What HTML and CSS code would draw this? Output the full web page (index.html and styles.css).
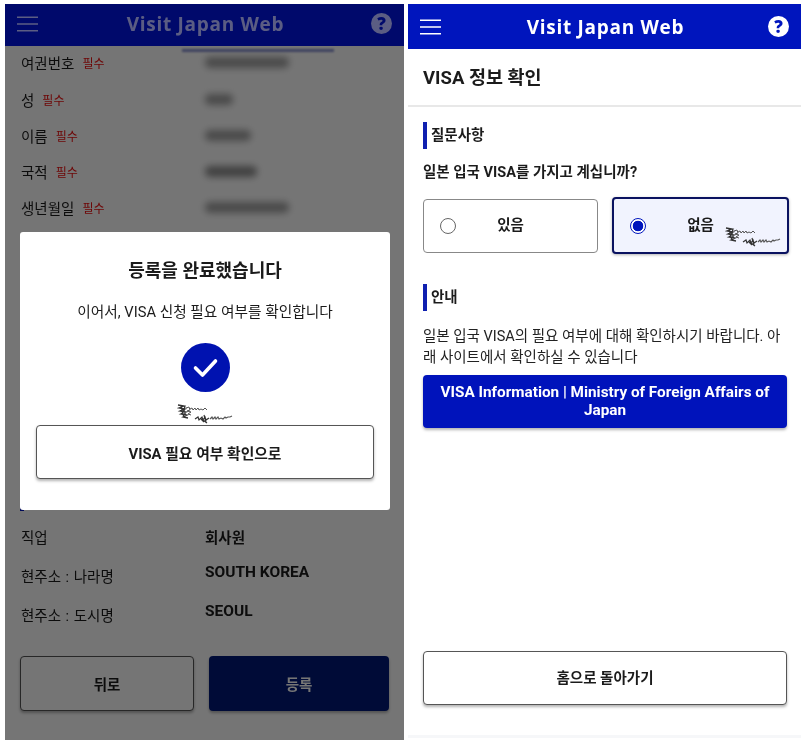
FILE: index.html
```html
<!DOCTYPE html>
<html lang="ko">

<head>
  <meta charset="utf-8">
  <title>Visit Japan Web</title>
  <link rel="stylesheet" href="styles.css">
</head>

<body>
  <svg class="defs" width="0" height="0">
    <symbol id="sig" viewBox="0 0 56 20">
      <path fill="none" stroke="#333" stroke-width="1.3" d="M1 1l6 1-5 2 6 1-5 2 6 1-5 2 6 1-4 2 5 1M4 1l1 6 2 6M8 2l-1 5 2 5" />
      <path fill="none" stroke="#555" stroke-width="1" d="M9 4l3-1 1 3-3 1 4 1-3 2 3 1M13 5l2-1 1 2 2-2 1 2 2-2 1 2 2-1 2 1 2-2 2 2" />
      <path fill="none" stroke="#333" stroke-width="1.2" d="M18 15l3-2 1 3 3-3 1 3 2-3 1 3 3-2M27 11l2 7M26 16l4 3M24 15l3 3" />
      <path fill="none" stroke="#555" stroke-width="1.1" d="M33 15l2-2 1 2 2-2 1 2 2-2 1 2 2-1 2 1 2-2 1 1 2-1 2 0 2-1" />
    </symbol>
  </svg>

  <div class="phone phone-left">
    <header class="topbar">
      <svg class="menu" viewBox="0 0 22 16"><path d="M0 1h22M0 8h22M0 15h22" /></svg>
      <div class="topbar-title">Visit Japan Web</div>
      <div class="help">?</div>
    </header>
    <div class="form">
      <div class="row row-first">
        <div class="label">여권번호<span class="req">필수</span></div>
        <div class="smudge smudge-lg"></div>
      </div>
      <div class="row">
        <div class="label">성<span class="req">필수</span></div>
        <div class="smudge smudge-sm"></div>
      </div>
      <div class="row">
        <div class="label">이름<span class="req">필수</span></div>
        <div class="smudge smudge-md"></div>
      </div>
      <div class="row">
        <div class="label">국적<span class="req">필수</span></div>
        <div class="smudge smudge-md2"></div>
      </div>
      <div class="row">
        <div class="label">생년월일<span class="req">필수</span></div>
        <div class="smudge smudge-lg"></div>
      </div>
    </div>
    <div class="hidden-part">
      <div class="section-edge"></div>
    </div>
    <div class="form-bottom">
      <div class="row-plain">
        <div class="label">직업</div>
        <div class="value value-ko">회사원</div>
      </div>
      <div class="row-plain row-high">
        <div class="label">현주소 : 나라명</div>
        <div class="value">SOUTH KOREA</div>
      </div>
      <div class="row-plain row-high">
        <div class="label">현주소 : 도시명</div>
        <div class="value">SEOUL</div>
      </div>
    </div>
    <div class="actions">
      <div class="btn btn-back">뒤로</div>
      <div class="btn btn-submit">등록</div>
    </div>

    <div class="blur-line"></div>
    <div class="overlay"></div>
    <div class="topbar-tint"></div>
    <div class="modal">
      <div class="modal-title">등록을 완료했습니다</div>
      <div class="modal-text">이어서, VISA 신청 필요 여부를 확인합니다</div>
      <svg class="check" viewBox="0 0 49 49">
        <circle cx="24.5" cy="24.5" r="24.5" fill="#0012b0" />
        <path d="M14.5 25l7 7 13-14" fill="none" stroke="#fff" stroke-width="3.6" stroke-linecap="round" stroke-linejoin="round" />
      </svg>
      <svg class="sig"><use href="#sig" /></svg>
      <div class="btn btn-modal">VISA 필요 여부 확인으로</div>
    </div>
  </div>

  <div class="phone phone-right">
    <header class="topbar">
      <svg class="menu" viewBox="0 0 22 16"><path d="M0 1h22M0 8h22M0 15h22" /></svg>
      <div class="topbar-title">Visit Japan Web</div>
      <div class="help">?</div>
    </header>
    <h1 class="page-title">VISA 정보 확인</h1>
    <div class="content">
      <div class="section-head">질문사항</div>
      <div class="question">일본 입국 VISA를 가지고 계십니까?</div>
      <div class="choices">
        <div class="choice">
          <span class="radio"></span>
          <span class="choice-text">있음</span>
        </div>
        <div class="choice choice-on">
          <span class="radio radio-on"></span>
          <span class="choice-text">없음</span>
          <svg class="sig sig-choice"><use href="#sig" /></svg>
        </div>
      </div>
      <div class="section-head section-info">안내</div>
      <p class="info">일본 입국 VISA의 필요 여부에 대해 확인하시기 바랍니다. 아래 사이트에서 확인하실 수 있습니다</p>
      <div class="btn btn-link">VISA Information | Ministry of Foreign Affairs of Japan</div>
      <div class="btn btn-home">홈으로 돌아가기</div>
    </div>
    <div class="foot-line"></div>
  </div>
</body>

</html>
```

FILE: styles.css
```css
* {
  margin: 0;
  padding: 0;
  box-sizing: border-box;
}

html,
body {
  height: 751px;
  overflow: hidden;
  background: #fff;
}

body {
  display: flex;
  align-items: flex-start;
  gap: 4px;
  padding: 4px 0 0 5px;
  font-family: Roboto, "Noto Sans CJK KR", sans-serif;
  font-size: 14.5px;
  color: #1b1b1b;
}

.defs {
  position: absolute;
}

.phone {
  position: relative;
  display: flex;
  flex-direction: column;
  filter: blur(.35px);
}

.phone-left {
  width: 399px;
  height: 736px;
  background: #fff;
}

.phone-right {
  width: 393px;
  height: 734px;
}

.topbar {
  height: 45px;
  flex: none;
  display: flex;
  align-items: center;
  justify-content: space-between;
  padding: 0 12px;
  background: #0015bd;
  color: #fff;
}

.phone-left .topbar {
  height: 42px;
  padding-bottom: 3px;
}

.topbar-title {
  margin-left: 2px;
  font-family: "Open Sans", sans-serif;
  font-weight: 700;
  font-size: 19px;
  letter-spacing: .7px;
}

.menu {
  width: 21px;
  height: 16px;
  stroke: #fff;
  stroke-width: 1.6;
}

.help {
  width: 21px;
  height: 21px;
  border-radius: 50%;
  background: #fff;
  color: #0015bd;
  font-family: "Open Sans", sans-serif;
  font-weight: 800;
  font-size: 17px;
  line-height: 21px;
  text-align: center;
}

/* left side, behind the dialog */
.blur-line {
  position: absolute;
  left: 177px;
  top: 45px;
  height: 3px;
  width: 152px;
  background: #8a92d0;
  filter: blur(.8px);
}

.form {
  padding: 0 16px;
}

.row {
  display: flex;
  align-items: center;
  height: 36px;
}

.row-first {
  height: 32px;
  margin-bottom: 3px;
}

.label {
  width: 184px;
  flex: none;
  word-spacing: 1px;
}

.req {
  margin-left: 8px;
  font-size: 12px;
  color: #ee1010;
}

.row .label {
  display: flex;
  align-items: center;
}

.smudge {
  height: 11px;
  background: #555;
  border-radius: 5px;
  filter: blur(3.5px);
  opacity: .55;
}

.smudge-lg {
  width: 84px;
}

.smudge-sm {
  width: 28px;
}

.smudge-md {
  width: 46px;
}

.smudge-md2 {
  width: 52px;
  background: #333;
}

.hidden-part {
  height: 286px;
  padding: 0 0 0 15px;
  display: flex;
  align-items: flex-end;
}

.section-edge {
  width: 4px;
  height: 26px;
  background: #0015bd;
}

.form-bottom {
  padding: 6px 16px 0;
}

.row-plain {
  display: flex;
  align-items: center;
  height: 39px;
}

.row-plain .value {
  font-weight: 700;
  font-size: 15.5px;
}

.row-plain .value-ko {
  font-size: 14.5px;
  margin-top: -1px;
}

.row-high .value {
  margin-top: -8px;
}

.actions {
  display: flex;
  gap: 15px;
  padding: 0 15px;
  margin-top: 22px;
}

.btn {
  display: flex;
  align-items: center;
  justify-content: center;
  text-align: center;
  font-weight: 700;
  border-radius: 4px;
  box-shadow: 0 2px 3px rgba(0, 0, 0, .3);
}

.btn-back {
  width: 174px;
  height: 55px;
  background: #fff;
  border: 1px solid #555;
}

.btn-submit {
  flex: 1;
  height: 55px;
  background: #001a78;
  color: #fff;
}

.overlay {
  position: absolute;
  inset: 0;
  background: rgba(0, 0, 0, .54);
}

.topbar-tint {
  position: absolute;
  left: 0;
  top: 0;
  width: 100%;
  height: 42px;
  background: rgba(0, 10, 180, .22);
}

.modal {
  position: absolute;
  left: 15px;
  top: 228px;
  width: 370px;
  height: 278px;
  background: #fff;
  border-radius: 3px;
  display: flex;
  flex-direction: column;
  align-items: center;
  padding: 26px 16px 0;
}

.modal-title {
  font-size: 18px;
  font-weight: 700;
  line-height: 25px;
}

.modal-text {
  margin-top: 19px;
  font-size: 14.7px;
  line-height: 20px;
}

.check {
  width: 49px;
  height: 49px;
  margin-top: 21px;
}

.sig {
  width: 56px;
  height: 20px;
}

.modal .sig {
  margin-top: 12px;
  flex: none;
}

.btn-modal {
  width: 338px;
  height: 54px;
  flex: none;
  margin-top: 1px;
  font-size: 14.8px;
  background: #fff;
  border: 1px solid #555;
}

/* right side */
.page-title {
  height: 58px;
  flex: none;
  padding-left: 15px;
  font-size: 18.5px;
  font-weight: 700;
  line-height: 58px;
  border-bottom: 2px solid #e8e8e8;
}

.content {
  flex: 1;
  display: flex;
  flex-direction: column;
  padding: 15px 14px 0 15px;
}

.section-head {
  height: 27px;
  padding-left: 4px;
  border-left: 4px solid #0f20b0;
  font-weight: 700;
  line-height: 27px;
}

.question {
  margin-top: 14px;
  font-weight: 700;
  line-height: 20px;
}

.choices {
  display: grid;
  grid-template-columns: 175px 177px;
  gap: 14px;
  margin-top: 14px;
  margin-right: -1px;
  align-items: center;
}

.choice {
  position: relative;
  display: flex;
  align-items: center;
  height: 54px;
  padding-left: 16px;
  background: #fff;
  border: 1px solid #888;
  border-radius: 4px;
}

.choice-on {
  height: 57px;
  background: #f1f3fe;
  border: 2px solid #0a1260;
  padding-left: 16px;
  box-shadow: 0 1px 3px rgba(0, 0, 0, .3);
}

.radio {
  width: 16px;
  height: 16px;
  flex: none;
  background: #fff;
  border: 1px solid #666;
  border-radius: 50%;
}

.radio-on {
  border-color: #0015bd;
  background: radial-gradient(circle, #0015bd 0 5px, #fff 5.6px);
}

.choice-text {
  flex: 1;
  margin-left: 6px;
  margin-bottom: 4px;
  padding-right: 38px;
  text-align: center;
  font-weight: 700;
}

.sig-choice {
  position: absolute;
  right: 6px;
  bottom: 5px;
}

.section-info {
  margin-top: 30px;
}

.info {
  margin-top: 15px;
  line-height: 21px;
  color: #222;
}

.btn-link {
  height: 53px;
  margin-top: 7px;
  padding: 0 0 1px;
  background: #0013bb;
  color: #fff;
  font-size: 15.3px;
  line-height: 18px;
}

.btn-home {
  height: 54px;
  margin-top: auto;
  margin-bottom: 33px;
  padding-bottom: 4px;
  background: #fff;
  border: 1px solid #555;
}

.foot-line {
  position: absolute;
  left: 0;
  right: 0;
  bottom: 0;
  height: 3px;
  background: #f6f7f9;
}
```
